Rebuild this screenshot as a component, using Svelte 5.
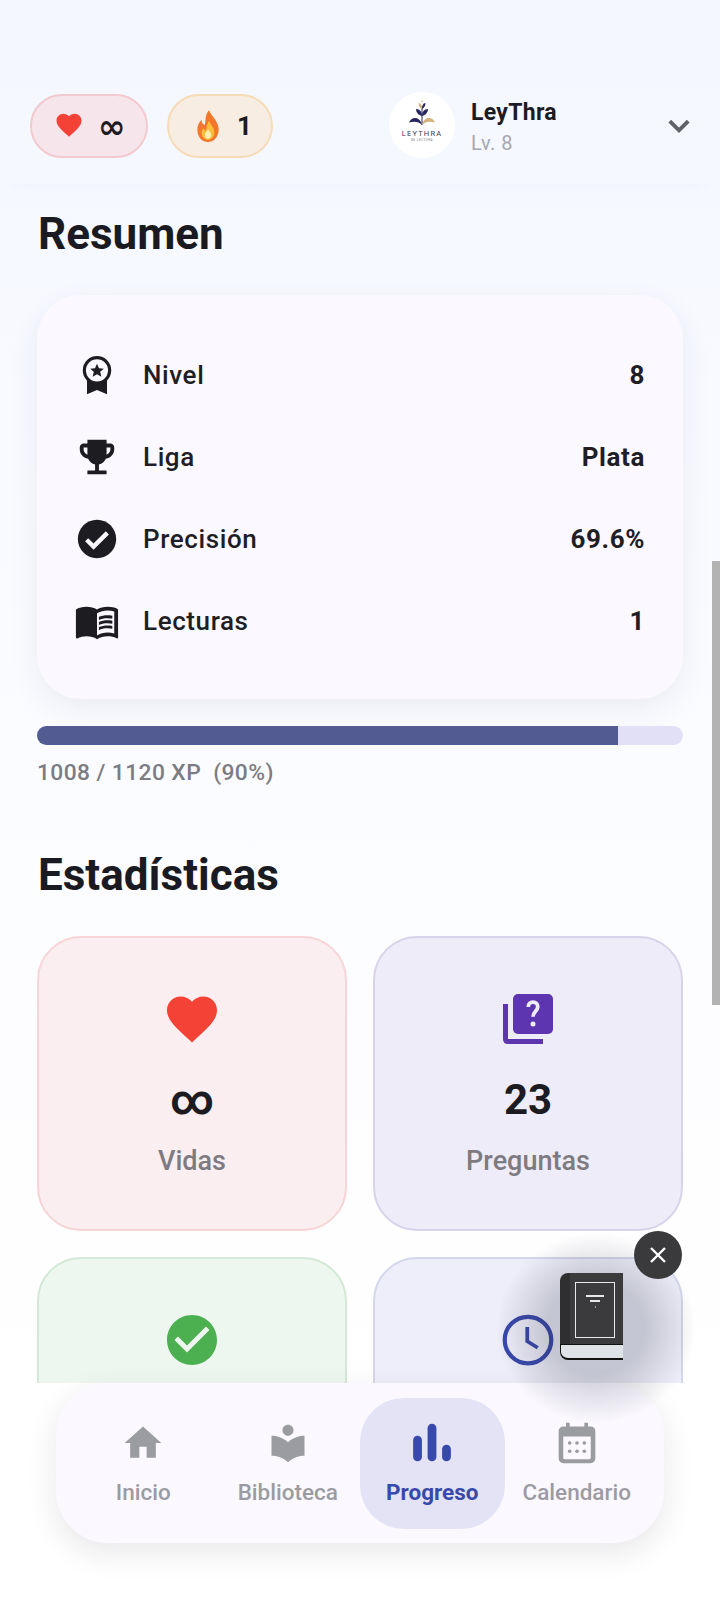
<script>
  const rows = [
    { id: "medal", label: "Nivel", value: "8" },
    { id: "trophy", label: "Liga", value: "Plata" },
    { id: "check", label: "Precisión", value: "69.6%" },
    { id: "book", label: "Lecturas", value: "1" }
  ];

  // the second row is cut off by the tab bar before its text starts
  const stats = [
    { id: "heart", tone: "red", value: "∞", label: "Vidas" },
    { id: "quiz", tone: "purple", value: "23", label: "Preguntas" },
    { id: "okay", tone: "green" },
    { id: "clock", tone: "blue" }
  ];

  const tabs = [
    { id: "home", label: "Inicio" },
    { id: "reader", label: "Biblioteca" },
    { id: "bars", label: "Progreso", active: true },
    { id: "calendar", label: "Calendario" }
  ];

  const heart = "M12 21.35l-1.45-1.32C5.4 15.36 2 12.28 2 8.5 2 5.42 4.42 3 7.5 3c1.74 0 3.41.81 4.5 2.09C13.09 3.81 14.76 3 16.5 3 19.58 3 22 5.42 22 8.5c0 3.78-3.4 6.86-8.55 11.54L12 21.35z";
  const circleCheck = "M12 2C6.48 2 2 6.48 2 12s4.48 10 10 10 10-4.48 10-10S17.52 2 12 2zm-2 15l-5-5 1.41-1.41L10 14.17l7.59-7.59L19 8l-9 9z";
</script>

{#snippet icon(id)}
  {#if id === "medal"}
    <svg viewBox="0 0 24 24" class="ico">
      <path d="M6 14v9.500l6-2.500 6 2.500V14z" fill="currentColor" />
      <circle cx="12" cy="9.200" r="7.600" fill="#fbf8ff" stroke="currentColor" stroke-width="1.900" />
      <path d="M12 5.200l1.200 2.700 2.900.3-2.200 1.900.7 2.900-2.600-1.500-2.600 1.500.7-2.900-2.200-1.900 2.900-.3z" fill="currentColor" />
    </svg>
  {:else if id === "trophy"}
    <svg viewBox="0 0 24 24" class="ico wide"><path fill="currentColor" d="M19 5h-2V3H7v2H5c-1.100 0-2 .9-2 2v1c0 2.550 1.920 4.630 4.390 4.940.63 1.500 1.980 2.630 3.610 2.960V19H7v2h10v-2h-4v-3.100c1.630-.33 2.980-1.460 3.610-2.960C19.080 12.630 21 10.550 21 8V7c0-1.100-.9-2-2-2zM5 8V7h2v3.820C5.840 10.400 5 9.300 5 8zm14 0c0 1.300-.84 2.400-2 2.820V7h2v1z" /></svg>
  {:else if id === "check"}
    <svg viewBox="0 0 24 24" class="ico wide"><path fill="currentColor" d="M12 2C6.480 2 2 6.480 2 12s4.480 10 10 10 10-4.480 10-10S17.520 2 12 2z" /><path d="M6.600 12.400l3.600 3.600 7.200-7.200" fill="none" stroke="#fbf8ff" stroke-width="2.300" /></svg>
  {:else if id === "book"}
    <svg viewBox="0 0 24 24" class="ico wide"><path fill="currentColor" d="M21 5c-1.110-.35-2.330-.5-3.500-.5-1.950 0-4.050.4-5.500 1.500-1.450-1.100-3.550-1.500-5.500-1.500S2.450 4.900 1 6v14.650c0 .25.25.5.5.5.1 0 .15-.05.25-.05C3.100 20.450 5.050 20 6.500 20c1.950 0 4.050.4 5.500 1.500 1.350-.85 3.800-1.500 5.500-1.500 1.650 0 3.350.3 4.750 1.050.1.05.15.05.25.05.25 0 .5-.25.5-.5V6c-.6-.45-1.250-.75-2-1zm0 13.500c-1.100-.35-2.300-.5-3.500-.5-1.700 0-4.150.65-5.500 1.500V8c1.350-.85 3.800-1.500 5.500-1.500 1.200 0 2.400.15 3.500.5v11.500z" /><path fill="currentColor" d="M17.500 10.500c.88 0 1.730.09 2.500.26V9.240c-.79-.15-1.640-.24-2.500-.24-1.700 0-3.240.29-4.500.83v1.660c1.130-.64 2.700-.99 4.500-.99zM13 12.490v1.660c1.130-.64 2.700-.99 4.500-.99.88 0 1.730.09 2.500.26V11.900c-.79-.15-1.640-.24-2.500-.24-1.700 0-3.240.3-4.500.83zM17.500 14.330c-1.700 0-3.240.29-4.500.83v1.660c1.130-.64 2.700-.99 4.500-.99.88 0 1.730.09 2.500.26v-1.520c-.79-.16-1.640-.24-2.500-.24z" /></svg>
  {:else if id === "heart"}
    <svg viewBox="0 0 24 24" class="stat-ico"><path fill="#f44336" d={heart} /></svg>
  {:else if id === "quiz"}
    <svg viewBox="0 0 24 24" class="stat-ico">
      <path fill="none" stroke="#5e35b1" stroke-width="2" d="M3 6v14c0 .6.4 1 1 1h14" />
      <rect x="6" y="2" width="16" height="16" rx="2" fill="#5e35b1" />
      <path fill="none" stroke="#efecf9" stroke-width="1.500" d="M12.100 7.200c0-1.200.8-2 1.900-2s1.900.8 1.900 1.900c0 1.700-1.900 1.900-1.900 4" />
      <circle cx="14" cy="14" r="1" fill="#efecf9" />
    </svg>
  {:else if id === "okay"}
    <svg viewBox="0 0 24 24" class="stat-ico"><path fill="#4caf50" d={circleCheck} /></svg>
  {:else if id === "clock"}
    <svg viewBox="0 0 24 24" class="stat-ico"><circle cx="12" cy="12" r="9.300" fill="none" stroke="#3949ab" stroke-width="1.700" /><path d="M11.700 6.800v5.700l4.200 2.600" fill="none" stroke="#3949ab" stroke-width="1.500" /></svg>
  {:else if id === "home"}
    <svg viewBox="0 0 24 24" class="tab-ico"><path fill="currentColor" d="M10 20v-6h4v6h5v-8h3L12 3 2 12h3v8z" /></svg>
  {:else if id === "reader"}
    <svg viewBox="0 0 24 24" class="tab-ico"><path fill="currentColor" d="M12 11.550C9.640 9.350 6.480 8 3 8v11c3.480 0 6.640 1.350 9 3.550 2.360-2.190 5.520-3.550 9-3.550V8c-3.480 0-6.640 1.350-9 3.550zM12 8c1.660 0 3-1.340 3-3s-1.340-3-3-3-3 1.340-3 3 1.340 3 3 3z" /></svg>
  {:else if id === "bars"}
    <svg viewBox="0 0 24 24" class="tab-ico"><rect x="1.700" y="8" width="4.800" height="14" rx="2.400" fill="currentColor" /><rect x="9.600" y="1.500" width="4.800" height="20.500" rx="2.400" fill="currentColor" /><rect x="17.500" y="13" width="4.800" height="9" rx="2.400" fill="currentColor" /></svg>
  {:else if id === "calendar"}
    <svg viewBox="0 0 24 24" class="tab-ico">
      <path fill="currentColor" fill-rule="evenodd" d="M6 1h2v2h8V1h2v2h1.500A2.500 2.500 0 0 1 22 5.500v15a2.500 2.500 0 0 1-2.500 2.500h-15A2.500 2.500 0 0 1 2 20.500v-15A2.500 2.500 0 0 1 4.500 3H6zM4.500 8.500v11.500a.8.8 0 0 0 .8.8h13.400a.8.8 0 0 0 .8-.8V8.500z" />
      <g fill="currentColor"><circle cx="8" cy="12" r="1" /><circle cx="12" cy="12" r="1" /><circle cx="16" cy="12" r="1" /><circle cx="8" cy="16.500" r="1" /><circle cx="12" cy="16.500" r="1" /><circle cx="16" cy="16.500" r="1" /></g>
    </svg>
  {/if}
{/snippet}

<div class="screen">
  <header class="top">
    <div class="pill pill-red">
      <svg viewBox="0 0 24 24" class="pill-ico"><path fill="#f44336" d={heart} /></svg>
      <span class="inf">∞</span>
    </div>
    <div class="pill pill-amber">
      <svg viewBox="0 0 24 32" class="flame">
        <path fill="#f4762a" d="M13 1c1 5 8 9 9 17 .6 7-4 13-10 13S2 26 2 19c0-4 2-7 4-9 0 3 1 4 3 5 1-5 0-9 4-14z" />
        <path fill="#fbbf3c" d="M13 11c1 4 5 6 5 11 0 4-3 7-6 7s-6-3-6-7c0-2 1-3 2-4 .5 1.500 1 2 2 2.500.5-3 1-6 3-9.500z" />
        <path fill="#fdeeb5" d="M12 19c1 2 3 3 3 5.500 0 2-1.500 3.500-3 3.500s-3-1.500-3-3.500c0-2 2-3 3-5.500z" />
      </svg>
      <span class="count">1</span>
    </div>
    <div class="user">
      <div class="avatar">
        <svg viewBox="0 0 40 27" class="sprout">
          <circle cx="20" cy="1.200" r=".8" fill="#d3b27c" />
          <path d="M20 25V6" stroke="#27275e" stroke-width="1" />
          <path d="M20 16c-4-1-6-4-6-7 4 0 6 3 6 7zM20 16c4-1 6-4 6-7-4 0-6 3-6 7z" fill="#27275e" />
          <path d="M20 9c-2-1-3.500-3-3.500-6 2.500 0 3.500 3 3.500 6z" fill="#d3b27c" />
          <path d="M20 9c2-1 3.500-3 3.500-6-2.500 0-3.500 3-3.500 6z" fill="#27275e" />
          <path d="M20 25c-3-3-7-4-13-2.500 2-6 11-7 13 2.500z" fill="#27275e" />
          <path d="M20 25c3-3 7-4 13-2.500-2-6-11-7-13 2.500z" fill="#d3b27c" />
        </svg>
        <span class="brand">LEYTHRA</span>
        <span class="brand-sub">DE LECTURA</span>
      </div>
      <div class="who">
        <span class="name">LeyThra</span>
        <span class="level">Lv. 8</span>
      </div>
    </div>
    <svg viewBox="0 0 24 24" class="chev"><path d="M3.500 7.500L12 16l8.500-8.500" fill="none" stroke="#5f6368" stroke-width="3.600" /></svg>
  </header>

  <main class="content">
    <h2>Resumen</h2>
    <section class="summary">
      {#each rows as row}
        <div class="row">
          <span class="row-ico">{@render icon(row.id)}</span>
          <span class="row-label">{row.label}</span>
          <span class="row-value">{row.value}</span>
        </div>
      {/each}
    </section>

    <div class="track"><div class="fill" style="width: 90%"></div></div>
    <p class="xp">1008 / 1120 XP&nbsp;&nbsp;(90%)</p>

    <h2 class="stats-title">Estadísticas</h2>
    <section class="grid">
      {#each stats as stat}
        <article class="card {stat.tone}">
          {@render icon(stat.id)}
          {#if stat.label}
            <strong>{stat.value}</strong>
            <span>{stat.label}</span>
          {/if}
        </article>
      {/each}
    </section>
  </main>

  <nav class="tabs">
    {#each tabs as tab}
      <div class="tab" class:active={tab.active}>
        {@render icon(tab.id)}
        <span>{tab.label}</span>
      </div>
    {/each}
  </nav>

  <div class="scrollbar"></div>

  <aside class="floating">
    <div class="glow"></div>
    <button class="close" aria-label="Cerrar">
      <svg viewBox="0 0 24 24"><path d="M5 5l14 14M19 5L5 19" stroke="#fff" stroke-width="2.400" fill="none" /></svg>
    </button>
    <div class="tome">
      <div class="cover">
        <div class="plate"><i></i><i class="short"></i><i class="dot"></i></div>
      </div>
      <div class="pages"></div>
    </div>
  </aside>
</div>

<style>
  :global(body) {
    margin: 0;
    background: #fff;
  }

  .screen {
    position: relative;
    width: 720px;
    height: 1600px;
    overflow: hidden;
    display: flex;
    flex-direction: column;
    font-family: Roboto, "Noto Sans", sans-serif;
    color: #1c1b22;
    background: linear-gradient(180deg, #f4f7ff 0%, #fafbff 40%, #fefeff 75%, #ffffff 100%);
  }

  .top {
    flex: none;
    height: 92px;
    margin-top: 92px;
    padding: 0 30px;
    display: flex;
    align-items: flex-start;
    box-shadow: 0 14px 14px -14px rgba(60, 60, 90, 0.035);
  }

  .pill {
    box-sizing: border-box;
    height: 64px;
    margin-top: 2px;
    border-radius: 32px;
    display: flex;
    align-items: center;
  }

  .pill-red {
    width: 118px;
    padding-left: 22px;
    background: #f6e6ec;
    border: 2px solid #f3c9d0;
  }

  .pill-amber {
    width: 106px;
    margin-left: 19px;
    padding-left: 26px;
    background: #f7ede3;
    border: 2px solid #f6dcb6;
  }

  .pill-ico {
    width: 30px;
    height: 30px;
    margin-top: -2px;
  }

  .flame {
    width: 26px;
    height: 34px;
  }

  .inf {
    margin-left: 14px;
    font-size: 33px;
    font-weight: 700;
    line-height: 1;
    font-family: "DejaVu Sans", sans-serif;
  }

  .count {
    margin-left: 16px;
    font-size: 26px;
    font-weight: 700;
  }

  .user {
    margin-left: 116px;
    display: flex;
    align-items: center;
    gap: 16px;
  }

  .avatar {
    width: 66px;
    height: 66px;
    border-radius: 50%;
    background: #fff;
    display: flex;
    flex-direction: column;
    align-items: center;
    padding-top: 8px;
    box-sizing: border-box;
  }

  .sprout {
    width: 40px;
    height: 27px;
  }

  .brand {
    margin-top: 2px;
    font-size: 7.500px;
    letter-spacing: 1.200px;
    line-height: 9px;
    color: #3c3c50;
  }

  .brand-sub {
    font-size: 3px;
    line-height: 5px;
    letter-spacing: 0.500px;
    color: #777;
  }

  .who {
    display: flex;
    flex-direction: column;
    gap: 1px;
    padding-top: 4px;
  }

  .name {
    font-size: 23px;
    font-weight: 700;
    line-height: 30px;
    letter-spacing: 0.300px;
  }

  .level {
    font-size: 20px;
    line-height: 28px;
    letter-spacing: 0.500px;
    color: #a7a7ad;
  }

  .chev {
    width: 26px;
    height: 26px;
    margin-left: auto;
    margin-top: 21px;
    margin-right: -2px;
  }

  .content {
    flex: 1;
    min-height: 0;
    overflow: hidden;
    padding: 0 37px;
  }

  h2 {
    margin: 25px 0 0 1px;
    font-size: 44px;
    line-height: 50px;
    font-weight: 700;
    color: #1a1b22;
  }

  .summary {
    box-sizing: border-box;
    height: 404px;
    margin-top: 36px;
    padding: 39px 38px 37px 38px;
    border-radius: 44px;
    background: #fbf8ff;
    box-shadow: 0 10px 30px rgba(40, 40, 70, 0.07);
    display: flex;
    flex-direction: column;
  }

  .row {
    flex: none;
    height: 82px;
    display: flex;
    align-items: center;
    font-size: 26px;
    font-weight: 500;
    letter-spacing: 0.600px;
    color: #1f1e25;
  }

  .row-ico {
    width: 44px;
    height: 44px;
    margin-right: 24px;
    display: flex;
    align-items: center;
    justify-content: center;
    color: #1d1c21;
  }

  .ico {
    width: 40px;
    height: 40px;
  }

  .ico.wide {
    width: 46px;
    height: 46px;
    flex: none;
  }

  .row-value {
    margin-left: auto;
    font-weight: 700;
  }

  .track {
    height: 19px;
    margin-top: 27px;
    border-radius: 9.500px;
    background: #e2e0f6;
    overflow: hidden;
  }

  .fill {
    height: 100%;
    background: #525b92;
  }

  .xp {
    margin: 14px 0 0;
    font-size: 22.800px;
    line-height: 28px;
    font-weight: 500;
    letter-spacing: 0.400px;
    color: #7c7c84;
  }

  .stats-title {
    margin-top: 63px;
  }

  .grid {
    margin-top: 36px;
    display: grid;
    grid-template-columns: 310px 310px;
    column-gap: 26px;
    row-gap: 26px;
  }

  .card {
    box-sizing: border-box;
    height: 295px;
    border-radius: 44px;
    border: 2px solid;
    display: flex;
    flex-direction: column;
    align-items: center;
    padding-top: 51px;
  }

  .card strong {
    margin-top: 23px;
    font-size: 42px;
    line-height: 56px;
    font-weight: 700;
    color: #1c1b22;
  }

  .card span {
    margin-top: 17px;
    font-size: 27px;
    line-height: 32px;
    font-weight: 500;
    color: #7d7b81;
  }

  .stat-ico {
    width: 60px;
    height: 60px;
  }

  .red { background: #fbeef0; border-color: #f7d5d7; }
  .purple { background: #efecf9; border-color: #d8d3ea; }
  .green { background: #edf6ef; border-color: #d3e8d6; }
  .blue { background: #edeef9; border-color: #d4d6ec; }

  .tabs {
    flex: none;
    box-sizing: border-box;
    height: 160px;
    margin: 0 56px 57px;
    padding: 0 15px;
    border-radius: 52px;
    background: #fbf9ff;
    box-shadow: 0 10px 30px rgba(30, 30, 50, 0.1);
    display: flex;
    align-items: center;
  }

  .tab {
    flex: 1;
    height: 131px;
    margin-top: 1px;
    border-radius: 44px;
    display: flex;
    flex-direction: column;
    align-items: center;
    justify-content: center;
    gap: 13px;
    color: #9b9ba2;
    font-size: 22.500px;
    line-height: 28px;
    font-weight: 500;
  }

  .tab.active {
    background: #e3e3f5;
    color: #3949ab;
    font-weight: 700;
  }

  .tab-ico {
    width: 44px;
    height: 44px;
  }

  .scrollbar {
    position: absolute;
    right: 0;
    top: 561px;
    width: 8px;
    height: 444px;
    background: #b3b3b3;
  }

  .floating {
    position: absolute;
    z-index: 5;
    left: 560px;
    top: 1273px;
    width: 63px;
    height: 87px;
  }

  .glow {
    position: absolute;
    left: -64px;
    top: -40px;
    width: 200px;
    height: 190px;
    background: radial-gradient(closest-side, rgba(35, 35, 55, 0.2) 48%, rgba(35, 35, 55, 0.11) 72%, rgba(35, 35, 55, 0) 100%);
  }

  .close {
    position: absolute;
    z-index: 1;
    left: 74px;
    top: -42px;
    width: 48px;
    height: 48px;
    padding: 12px;
    border: none;
    border-radius: 50%;
    background: #3a3a3c;
  }

  .close svg {
    display: block;
    width: 24px;
    height: 24px;
  }

  .tome {
    position: relative;
    width: 63px;
    height: 87px;
    display: flex;
    flex-direction: column;
  }

  .cover {
    box-sizing: border-box;
    flex: none;
    height: 72px;
    padding: 9px 8px 7px 15px;
    background: linear-gradient(90deg, #2f2f31 0 10px, #3b3b3d 10px);
    border-radius: 8px 0 0 0;
  }

  .plate {
    box-sizing: border-box;
    width: 40px;
    height: 56px;
    border: 1.500px solid #e8e8ea;
    display: flex;
    flex-direction: column;
    align-items: center;
    gap: 3px;
    padding-top: 12px;
  }

  .plate i {
    width: 18px;
    height: 2px;
    background: #e8e8ea;
  }

  .plate i.short {
    width: 10px;
  }

  .plate i.dot {
    width: 1px;
    height: 2px;
    margin-top: 1px;
    background: #999;
  }

  .pages {
    flex: none;
    box-sizing: border-box;
    height: 16px;
    margin-top: -1px;
    background: #dfe3e7;
    border: 1.500px solid #111;
    border-bottom-width: 2px;
    border-right: none;
    border-radius: 0 0 0 8px;
  }
</style>
